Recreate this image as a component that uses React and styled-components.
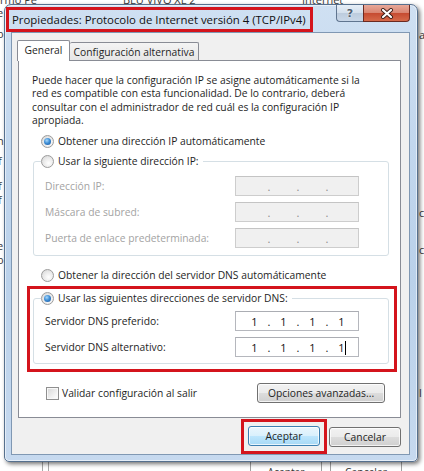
import React from "react";
import styled, { createGlobalStyle } from "styled-components";

const RED = "#d4141c";

const GlobalStyle = createGlobalStyle`
  html, body {
    margin: 0;
    padding: 0;
    background: #ffffff;
  }
  body {
    font-family: "Open Sans", "Noto Sans", sans-serif;
    font-size: 10.3px;
    color: #1e1e1e;
  }
`;

const Radio = ({ checked }) => <RadioDot $checked={checked} />;

const IpField = ({ value, disabled, caret }) => {
  const parts = value ? value.split(".") : ["", "", "", ""];
  return (
    <IpBox $disabled={disabled}>
      {parts.map((p, i) => (
        <React.Fragment key={i}>
          <Segment>
            {p}
            {caret && i === 3 && <Caret />}
          </Segment>
          {i < 3 && <Dot $disabled={disabled}>.</Dot>}
        </React.Fragment>
      ))}
    </IpBox>
  );
};

const App = () => {
  return (
    <>
      <GlobalStyle />
      <Desktop>
        <Behind style={{ left: 0, top: -8 }}>rmo Pe</Behind>
        <Behind style={{ left: 123, top: -8 }}>BLU VIVO XL 2</Behind>
        <Behind style={{ left: 302, top: -8 }}>Internet</Behind>
        <Behind style={{ left: -3, top: 5 }}>e</Behind>
        <Behind style={{ left: -3, top: 26 }}>o</Behind>
        <Behind style={{ left: 419, top: 27 }}>a</Behind>
        <Behind style={{ left: -3, top: 133 }}>n</Behind>
        <Behind style={{ left: -2, top: 153 }}>f</Behind>
        <Behind style={{ left: -2, top: 178 }}>f</Behind>
        <Behind style={{ left: -2, top: 192 }}>f</Behind>
        <Behind style={{ left: -3, top: 238 }}>e</Behind>
        <Behind style={{ left: -3, top: 252 }}>o</Behind>
        <Behind style={{ left: 419, top: 205 }}>c</Behind>
        <Behind style={{ left: 419, top: 242 }}>c</Behind>
        <Behind style={{ left: 419, top: 385 }}>l</Behind>
        <BehindLine style={{ left: 42 }} />
        <BehindLine style={{ left: 48 }} />
        <BehindButton style={{ left: 250 }}>Aceptar</BehindButton>
        <BehindButton style={{ left: 330 }}>Cancelar</BehindButton>

        <Window>
          <TitleBar>
            <TitleHighlight>
              Propiedades: Protocolo de Internet versión 4 (TCP/IPv4)
            </TitleHighlight>
            <CaptionButtons>
              <HelpButton>?</HelpButton>
              <CloseButton>
                <svg width="14" height="11" viewBox="0 0 14 11">
                  <path d="M3 2 L11 9 M11 2 L3 9" stroke="#3b1d17" strokeWidth="4" strokeLinecap="round" />
                  <path d="M3 2 L11 9 M11 2 L3 9" stroke="#ffffff" strokeWidth="2.2" strokeLinecap="round" />
                </svg>
              </CloseButton>
            </CaptionButtons>
          </TitleBar>

          <Client>
            <TabStrip>
              <Tab $active>General</Tab>
              <Tab>Configuración alternativa</Tab>
            </TabStrip>
            <Panel>
              <Intro>
                Puede hacer que la configuración IP se asigne automáticamente si la
                <br />
                red es compatible con esta funcionalidad. De lo contrario, deberá
                <br />
                consultar con el administrador de red cuál es la configuración IP
                <br />
                apropiada.
              </Intro>

              <RadioRow $top={7}>
                <Radio checked />
                Obtener una dirección IP automáticamente
              </RadioRow>

              <Group $top={6} $left={14} $right={11}>
                <Legend>
                  <RadioRow>
                    <Radio />
                    Usar la siguiente dirección IP:
                  </RadioRow>
                </Legend>
                <FieldGrid>
                  <FieldLabel $disabled>Dirección IP:</FieldLabel>
                  <IpField disabled />
                  <FieldLabel $disabled>Máscara de subred:</FieldLabel>
                  <IpField disabled />
                  <FieldLabel $disabled>Puerta de enlace predeterminada:</FieldLabel>
                  <IpField disabled />
                </FieldGrid>
              </Group>

              <RadioRow $top={12}>
                <Radio />
                Obtener la dirección del servidor DNS automáticamente
              </RadioRow>

              <DnsHighlight>
                <Group $left={3} $right={5} $tight>
                  <Legend>
                    <RadioRow>
                      <Radio checked />
                      Usar las siguientes direcciones de servidor DNS:
                    </RadioRow>
                  </Legend>
                  <FieldGrid>
                    <FieldLabel>Servidor DNS preferido:</FieldLabel>
                    <IpField value="1.1.1.1" />
                    <FieldLabel>Servidor DNS alternativo:</FieldLabel>
                    <IpField value="1.1.1.1" caret />
                  </FieldGrid>
                </Group>
              </DnsHighlight>

              <BottomRow>
                <CheckLabel>
                  <CheckBox />
                  Validar configuración al salir
                </CheckLabel>
                <Button $wide>Opciones avanzadas...</Button>
              </BottomRow>
            </Panel>

            <DialogButtons>
              <OkHighlight>
                <Button $default>Aceptar</Button>
              </OkHighlight>
              <Button>Cancelar</Button>
            </DialogButtons>
          </Client>
        </Window>
      </Desktop>
    </>
  );
};

export default App;

const Desktop = styled.div`
  position: relative;
  width: 424px;
  height: 471px;
  overflow: hidden;
  background: #ffffff;
`;

const Behind = styled.span`
  position: absolute;
  font-family: "Open Sans", sans-serif;
  font-size: 11px;
  color: #3a3a3a;
`;

const BehindLine = styled.div`
  position: absolute;
  top: 455px;
  width: 1px;
  height: 20px;
  background: #a8a8a8;
`;

const BehindButton = styled.div`
  position: absolute;
  top: 455px;
  width: 72px;
  height: 22px;
  box-sizing: border-box;
  border-left: 1px solid #a0a0a0;
  border-right: 1px solid #a0a0a0;
  padding-top: 10px;
  text-align: center;
  font-size: 10.3px;
  color: #333;
`;

const Window = styled.div`
  position: absolute;
  left: 4px;
  top: 4px;
  width: 414px;
  height: 458px;
  box-sizing: border-box;
  display: flex;
  flex-direction: column;
  border: 1px solid #56708e;
  border-radius: 7px 7px 5px 5px;
  background: linear-gradient(to bottom, #cfe0f2 0%, #c2d7ee 30%, #bad1ea 60%, #c6d9ef 100%);
  box-shadow: 2px 2px 4px rgba(0, 0, 0, 0.55), inset 0 0 0 1px rgba(255, 255, 255, 0.55);
`;

const TitleBar = styled.div`
  height: 27px;
  display: flex;
  align-items: flex-start;
  padding-left: 1px;
`;

const TitleHighlight = styled.div`
  margin-top: 2px;
  height: 25px;
  box-sizing: border-box;
  border: 3px solid ${RED};
  padding: 0 4px 0 3px;
  display: flex;
  align-items: center;
  font-size: 11.4px;
  color: #111;
  white-space: nowrap;
`;

const CaptionButtons = styled.div`
  margin-left: auto;
  margin-right: 7px;
  display: flex;
`;

const HelpButton = styled.div`
  width: 27px;
  height: 17px;
  box-sizing: border-box;
  border: 1px solid #60758f;
  border-top: none;
  border-right: none;
  border-radius: 0 0 0 4px;
  background: linear-gradient(to bottom, #e6eef7 0%, #d3dfec 50%, #bccbdd 50%, #c9d7e8 100%);
  display: flex;
  align-items: center;
  justify-content: center;
  font-family: "DejaVu Sans", sans-serif;
  font-weight: bold;
  font-size: 11px;
  color: #4f5e70;
  text-shadow: 0 0 2px #ffffff;
`;

const CloseButton = styled.div`
  width: 47px;
  height: 17px;
  box-sizing: border-box;
  border: 1px solid #6b2a21;
  border-top: none;
  border-radius: 0 0 4px 0;
  background: linear-gradient(to bottom, #e8a899 0%, #d98470 50%, #c54a30 50%, #d66a4a 100%);
  display: flex;
  align-items: center;
  justify-content: center;
`;

const Client = styled.div`
  flex: 1;
  margin: 0 7px 6px 6px;
  border: 1px solid #8098b3;
  background: #f0f0f0;
  padding: 7px 8px 0 6px;
  display: flex;
  flex-direction: column;
`;

const TabStrip = styled.div`
  height: 20px;
  display: flex;
  align-items: flex-end;
  position: relative;
  z-index: 1;
`;

const Tab = styled.div`
  box-sizing: border-box;
  width: ${(p) => (p.$active ? "53px" : "129px")};
  height: ${(p) => (p.$active ? "21px" : "18px")};
  margin-left: ${(p) => (p.$active ? "-1px" : "0")};
  margin-bottom: ${(p) => (p.$active ? "-1px" : "0")};
  border: 1px solid #898c95;
  border-bottom: none;
  border-left: ${(p) => (p.$active ? "1px solid #898c95" : "none")};
  border-radius: 2px 2px 0 0;
  background: ${(p) =>
    p.$active ? "#ffffff" : "linear-gradient(to bottom, #f4f4f4, #e6e6e6)"};
  display: flex;
  align-items: center;
  justify-content: center;
  padding-bottom: ${(p) => (p.$active ? "2px" : "0")};
  color: #1e1e1e;
  white-space: nowrap;
`;

const Panel = styled.div`
  height: 358px;
  box-sizing: border-box;
  border: 1px solid #898c95;
  background: #ffffff;
  display: flex;
  flex-direction: column;
`;

const Intro = styled.p`
  margin: 13px 0 0 13px;
  line-height: 13.3px;
  white-space: nowrap;
`;

const RadioRow = styled.div`
  display: flex;
  align-items: center;
  gap: 4px;
  height: 14px;
  white-space: nowrap;
  margin-top: ${(p) => (p.$top ? `${p.$top}px` : "0")};
  margin-left: ${(p) => (p.$top ? "22px" : "0")};
`;

const RadioDot = styled.span`
  position: relative;
  width: 13px;
  height: 13px;
  box-sizing: border-box;
  flex: none;
  border-radius: 50%;
  border: 1px solid #9c9c9c;
  background: radial-gradient(circle at 60% 65%, #ffffff 0%, #e8e8e8 55%, #cfcfcf 100%);

  &::after {
    content: "";
    display: ${(p) => (p.$checked ? "block" : "none")};
    position: absolute;
    left: 2px;
    top: 2px;
    width: 7px;
    height: 7px;
    border-radius: 50%;
    background: radial-gradient(circle at 40% 35%, #a9d8fb 0%, #3f8fd6 45%, #154f96 100%);
  }
`;

const Group = styled.fieldset`
  margin: ${(p) => (p.$top ? `${p.$top}px` : "0")} ${(p) => p.$right}px 0 ${(p) => p.$left}px;
  padding: ${(p) => (p.$tight ? "6px 0 6px 11px" : "8px 0 7px 11px")};
  border: 1px solid #d5dfe5;
  border-radius: 3px;
  min-width: 0;
`;

const Legend = styled.legend`
  margin-left: -4px;
  padding: 0 4px 0 0;
`;

const FieldGrid = styled.div`
  display: grid;
  grid-template-columns: 190px 124px;
  row-gap: 6px;
  align-items: center;
`;

const FieldLabel = styled.span`
  color: ${(p) => (p.$disabled ? "#a3a3a3" : "#1e1e1e")};
  white-space: nowrap;
`;

const IpBox = styled.div`
  height: 20px;
  box-sizing: border-box;
  border: 1px solid ${(p) => (p.$disabled ? "#cdcdcd" : "#b5b7bd")};
  border-top-color: ${(p) => (p.$disabled ? "#c4c4c4" : "#abadb3")};
  background: ${(p) => (p.$disabled ? "#f0f0f0" : "#ffffff")};
  display: flex;
  align-items: center;
  padding-left: 8px;
  font-size: 11px;
  color: #111;
`;

const Segment = styled.span`
  position: relative;
  width: 21px;
  text-align: center;
`;

const Dot = styled.span`
  width: 8px;
  text-align: center;
  color: ${(p) => (p.$disabled ? "#8a8a8a" : "#111")};
`;

const Caret = styled.span`
  position: absolute;
  left: 14px;
  top: 1px;
  width: 1px;
  height: 14px;
  background: #000;
`;

const DnsHighlight = styled.div`
  margin: 4px 3px 0 8px;
  border: 3px solid ${RED};
  padding: 2px 0 5px 0;
`;

const BottomRow = styled.div`
  margin: 11px 15px 0 27px;
  height: 20px;
  display: flex;
  align-items: center;
`;

const CheckLabel = styled.label`
  display: flex;
  align-items: center;
  gap: 3px;
  white-space: nowrap;
`;

const CheckBox = styled.span`
  width: 13px;
  height: 13px;
  box-sizing: border-box;
  border: 1px solid #8f8f8f;
  background: linear-gradient(135deg, #d6d6d6 0%, #f4f4f4 70%, #ffffff 100%);
  box-shadow: inset 0 0 0 1px #f8f8f8;
`;

const Button = styled.div`
  width: ${(p) => (p.$wide ? "128px" : "72px")};
  height: 20px;
  box-sizing: border-box;
  margin-left: ${(p) => (p.$wide ? "auto" : "0")};
  border: 1px solid ${(p) => (p.$default ? "#3c7fb1" : "#707070")};
  border-radius: 3px;
  background: ${(p) =>
    p.$default
      ? "linear-gradient(to bottom, #eaf6fd 0%, #d9f0fc 50%, #bee6fd 50%, #a7d9f5 100%)"
      : "linear-gradient(to bottom, #f2f2f2 0%, #ebebeb 50%, #dddddd 50%, #cfcfcf 100%)"};
  box-shadow: inset 0 0 0 1px rgba(255, 255, 255, 0.75);
  display: flex;
  align-items: center;
  justify-content: center;
  white-space: nowrap;
  color: #1e1e1e;
`;

const DialogButtons = styled.div`
  margin-top: 1px;
  display: flex;
  justify-content: flex-end;
  align-items: center;
  gap: 2px;
`;

const OkHighlight = styled.div`
  border: 3px solid ${RED};
  padding: 4px 4px 5px 4px;
`;
